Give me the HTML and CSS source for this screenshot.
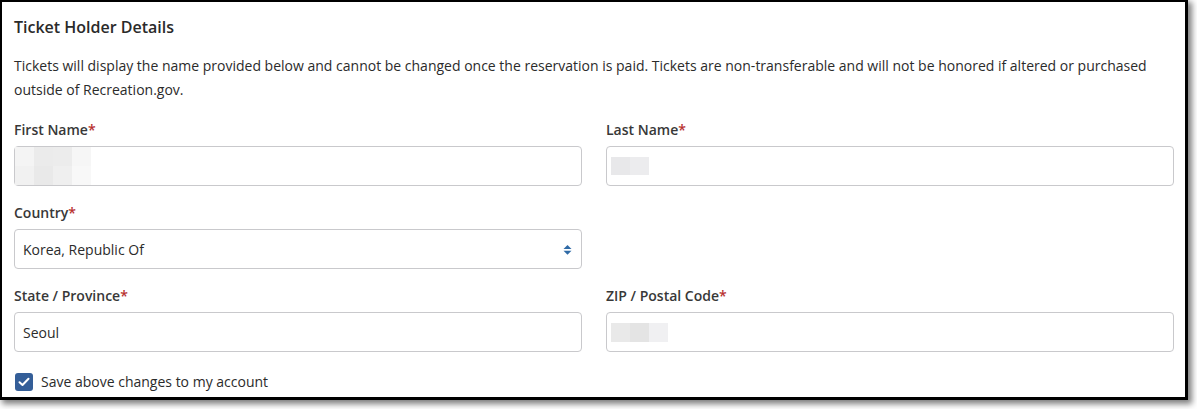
FILE: index.html
```html
<!DOCTYPE html>
<html lang="en">
<head>
<meta charset="utf-8">
<title>Ticket Holder Details</title>
<link rel="stylesheet" href="styles.css">
</head>
<body>
<div class="frame">
  <h2 class="title">Ticket Holder Details</h2>
  <p class="intro">Tickets will display the name provided below and cannot be changed once the reservation is paid. Tickets are non-transferable and will not be honored if altered or purchased outside of Recreation.gov.</p>
  <div class="grid">
    <div class="field">
      <label class="label">First Name<span class="req">*</span></label>
      <div class="input">
        <div class="blur blur-first">
          <span class="c c1"></span><span class="c c2"></span><span class="c c3"></span><span class="c c4"></span>
          <span class="c c5"></span><span class="c c6"></span><span class="c c7"></span><span class="c c8"></span>
        </div>
      </div>
    </div>
    <div class="field">
      <label class="label">Last Name<span class="req">*</span></label>
      <div class="input">
        <div class="blur blur-last"><span class="c l1"></span><span class="c l2"></span></div>
      </div>
    </div>
    <div class="field">
      <label class="label">Country<span class="req">*</span></label>
      <div class="input select">
        <span class="value">Korea, Republic Of</span>
        <svg class="arrows" width="9" height="10" viewBox="0 0 9 10" aria-hidden="true">
          <polygon points="0.5,4 4.5,0 8.5,4" fill="#2f6aa6"/>
          <polygon points="0.5,5.8 4.5,9.8 8.5,5.8" fill="#2f6aa6"/>
        </svg>
      </div>
    </div>
    <div class="field empty"></div>
    <div class="field">
      <label class="label">State / Province<span class="req">*</span></label>
      <div class="input"><span class="value">Seoul</span></div>
    </div>
    <div class="field">
      <label class="label">ZIP / Postal Code<span class="req">*</span></label>
      <div class="input">
        <div class="blur blur-zip"><span class="c z1"></span><span class="c z2"></span><span class="c z3"></span></div>
      </div>
    </div>
  </div>
  <label class="check">
    <span class="box">
      <svg width="12" height="10" viewBox="0 0 12 10" aria-hidden="true">
        <polyline points="1.5,5.2 4.5,8 10.5,1.8" fill="none" stroke="#fff" stroke-width="2" stroke-linecap="round" stroke-linejoin="round"/>
      </svg>
    </span>
    <span class="check-text">Save above changes to my account</span>
  </label>
</div>
</body>
</html>
```

FILE: styles.css
```css
* { box-sizing: border-box; }

html, body {
  margin: 0;
  padding: 0;
  background: #fff;
}

body {
  font-family: "Open Sans", "Noto Sans", "Liberation Sans", sans-serif;
  color: #2b2b2b;
  width: 1197px;
  height: 409px;
  overflow: hidden;
}

.frame {
  width: 1188px;
  height: 400px;
  border-style: solid;
  border-color: #000;
  border-width: 2px 3px 3px 2px;
  padding: 13px 11px 0 12px;
  background: #fff;
  box-shadow: 3px 3px 6px 1px rgba(0, 0, 0, 0.5);
}

.title {
  margin: 0;
  font-size: 16px;
  font-weight: 600;
  line-height: 24px;
  color: #2a2a2a;
}

.intro {
  margin: 15px 0 0;
  font-size: 14px;
  line-height: 24px;
  color: #2b2b2b;
}

.grid {
  margin-top: 18px;
  display: grid;
  grid-template-columns: 568px 568px;
  column-gap: 24px;
  row-gap: 17px;
}

.field {
  display: flex;
  flex-direction: column;
}

.label {
  font-size: 14px;
  font-weight: 600;
  line-height: 20px;
  color: #383838;
  margin-bottom: 6px;
}

.req {
  color: #b8312f;
}

.input {
  height: 40px;
  border: 1px solid #c9c9cc;
  border-radius: 4px;
  display: flex;
  align-items: center;
  padding: 0 8px;
  font-size: 14px;
  color: #2b2b2b;
}

.select {
  justify-content: space-between;
  padding-right: 9px;
}

.arrows {
  display: block;
  margin-top: 1px;
}

.blur {
  display: grid;
}

.blur-first {
  grid-template-columns: repeat(4, 19px);
  grid-template-rows: 19px 19px;
  margin-left: -8px;
}

.blur-last {
  grid-template-columns: repeat(2, 19px);
  grid-template-rows: 18px;
  margin-left: -4px;
}

.blur-zip {
  grid-template-columns: repeat(3, 19px);
  grid-template-rows: 19px;
  margin-left: -4px;
}

.c { display: block; }
.c1 { background: #f4f4f4; }
.c2 { background: #ebebeb; }
.c3 { background: #ececec; }
.c4 { background: #f6f6f6; }
.c5 { background: #f1f1f1; }
.c6 { background: #e9e9e9; }
.c7 { background: #efefef; }
.c8 { background: #f8f8f8; }
.l1 { background: #e8e8ea; }
.l2 { background: #ececee; }
.z1 { background: #e9e9e9; }
.z2 { background: #e4e4e4; }
.z3 { background: #f0f0f2; }

.check {
  margin-top: 20px;
  display: flex;
  align-items: center;
  gap: 8px;
  padding-left: 1px;
}

.box {
  width: 18px;
  height: 18px;
  border-radius: 3px;
  background: #345e98;
  display: flex;
  align-items: center;
  justify-content: center;
}

.box svg { display: block; }

.check-text {
  font-size: 14px;
  line-height: 20px;
  color: #2b2b2b;
}
```
